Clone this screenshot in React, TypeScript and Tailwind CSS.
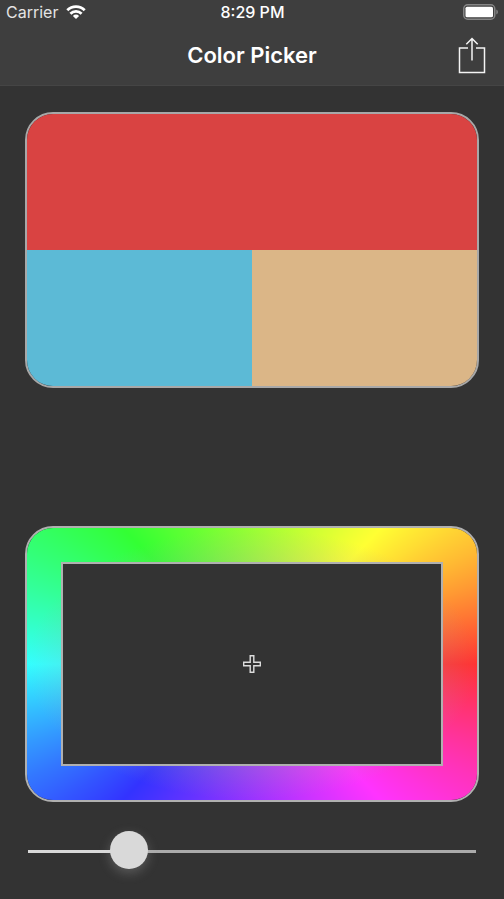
import { useState } from "react";

const CARD_WIDTH = 454;
const CARD_HEIGHT = 276;

// Hues sweep clockwise from the right edge, stretched to the card's proportions.
function hueSweep(width: number, height: number) {
  const stops: string[] = [];
  for (let step = 0; step <= 360; step += 10) {
    const t = (step * Math.PI) / 180;
    let angle = (Math.atan2(Math.sin(t) * height, Math.cos(t) * width) * 180) / Math.PI;
    if (angle < 0 || step === 360) angle += 360;
    stops.push(`hsl(${360 - step} 100% 60%) ${(step === 360 ? 360 : angle).toFixed(2)}deg`);
  }
  return `conic-gradient(from 90deg, ${stops.join(", ")})`;
}

function WifiIcon() {
  return (
    <svg viewBox="0 0 20 14" className="h-[14px] w-5" fill="none" stroke="#fff" strokeWidth="2.8" aria-hidden="true">
      <path d="M1.3 5.2a12.4 12.4 0 0 1 17.4 0" />
      <path d="M4.4 8.8a7.9 7.9 0 0 1 11.2 0" />
      <path d="M10 14 6.9 10.9a4.4 4.4 0 0 1 6.2 0Z" fill="#fff" stroke="none" />
    </svg>
  );
}

function BatteryIcon() {
  return (
    <svg viewBox="0 0 36 16" className="h-4 w-9" aria-hidden="true">
      <rect x="0.75" y="0.75" width="31" height="14.5" rx="4" fill="none" stroke="#858585" strokeWidth="1.5" />
      <rect x="2.5" y="2.7" width="27.5" height="10.6" rx="1.6" fill="#fff" />
      <path d="M33.3 5.5a2.7 2.7 0 0 1 0 5Z" fill="#858585" />
    </svg>
  );
}

function ShareIcon() {
  return (
    <svg viewBox="0 0 28 37" className="h-[37px] w-7" fill="none" stroke="#f4f4f4" strokeWidth="1.5" aria-hidden="true">
      <path d="M10 11H1.5v24.5h25V11H18" />
      <path d="M14 23.5V1.6M8.3 7.2 14 1.5l5.7 5.7" />
    </svg>
  );
}

function CrosshairIcon() {
  return (
    <svg viewBox="0 0 20 20" className="size-5" fill="none" stroke="#dcdcdc" strokeWidth="1.4" aria-hidden="true">
      <path d="M8.2 1.7h3.6v6.5h6.5v3.6h-6.5v6.5H8.2v-6.5H1.7V8.2h6.5Z" />
    </svg>
  );
}

export default function App() {
  const [brightness, setBrightness] = useState(20);

  return (
    <div className="min-h-screen bg-[#333333] font-['Inter','Liberation_Sans',sans-serif] text-white">
      <header className="border-b border-[#454545] bg-[#3e3e3e]">
        <div className="grid h-6 grid-cols-3 items-center pr-[5px] pl-[6px] text-base">
          <div className="flex items-center gap-2 text-[#e4e4e4]">
            <span>Carrier</span>
            <WifiIcon />
          </div>
          <time className="text-center font-medium">8:29 PM</time>
          <div className="flex justify-end">
            <BatteryIcon />
          </div>
        </div>
        <div className="grid h-[61px] grid-cols-[1fr_auto_1fr] items-center px-[18px] pt-px">
          <h1 className="col-start-2 text-[22px] font-semibold">Color Picker</h1>
          <button type="button" aria-label="Share" className="justify-self-end">
            <ShareIcon />
          </button>
        </div>
      </header>

      <main className="px-[25px] pt-[26px]">
        <section
          aria-label="Palette"
          className="grid aspect-[454/276] grid-cols-2 grid-rows-2 overflow-hidden rounded-[28px] border-2 border-[#a8a8a8]"
        >
          <button type="button" aria-label="Red" className="col-span-2 bg-[#d94342]" />
          <button type="button" aria-label="Blue" className="bg-[#5cbad6]" />
          <button type="button" aria-label="Tan" className="bg-[#dbb687]" />
        </section>

        <section
          aria-label="Hue"
          className="mt-[138px] aspect-[454/276] overflow-hidden rounded-[28px] border-2 border-[#b0b0b0]"
        >
          <div className="size-full" style={{ background: hueSweep(CARD_WIDTH, CARD_HEIGHT) }}>
            <div className="flex size-full bg-[radial-gradient(closest-side,#a6a6a6,transparent)] p-[34px]">
              <div className="flex flex-1 items-center justify-center border-2 border-[#b0b0b0] bg-[#333333]">
                <CrosshairIcon />
              </div>
            </div>
          </div>
        </section>

        <div className="px-[3px] pt-[29px]">
          <input
            type="range"
            aria-label="Brightness"
            min={0}
            max={100}
            value={brightness}
            onChange={(event) => setBrightness(Number(event.target.value))}
            style={{
              backgroundImage: `linear-gradient(to right, #d9d9d9 ${brightness}%, #ababab ${brightness}%)`,
            }}
            className="block h-[38px] w-full appearance-none bg-[length:100%_3px] bg-[position:0_19px] bg-no-repeat [&::-webkit-slider-thumb]:size-[38px] [&::-webkit-slider-thumb]:appearance-none [&::-webkit-slider-thumb]:rounded-full [&::-webkit-slider-thumb]:bg-[#d9d9d9] [&::-webkit-slider-thumb]:shadow-[0_4px_12px_rgba(217,217,217,0.25)]"
          />
        </div>
      </main>
    </div>
  );
}
